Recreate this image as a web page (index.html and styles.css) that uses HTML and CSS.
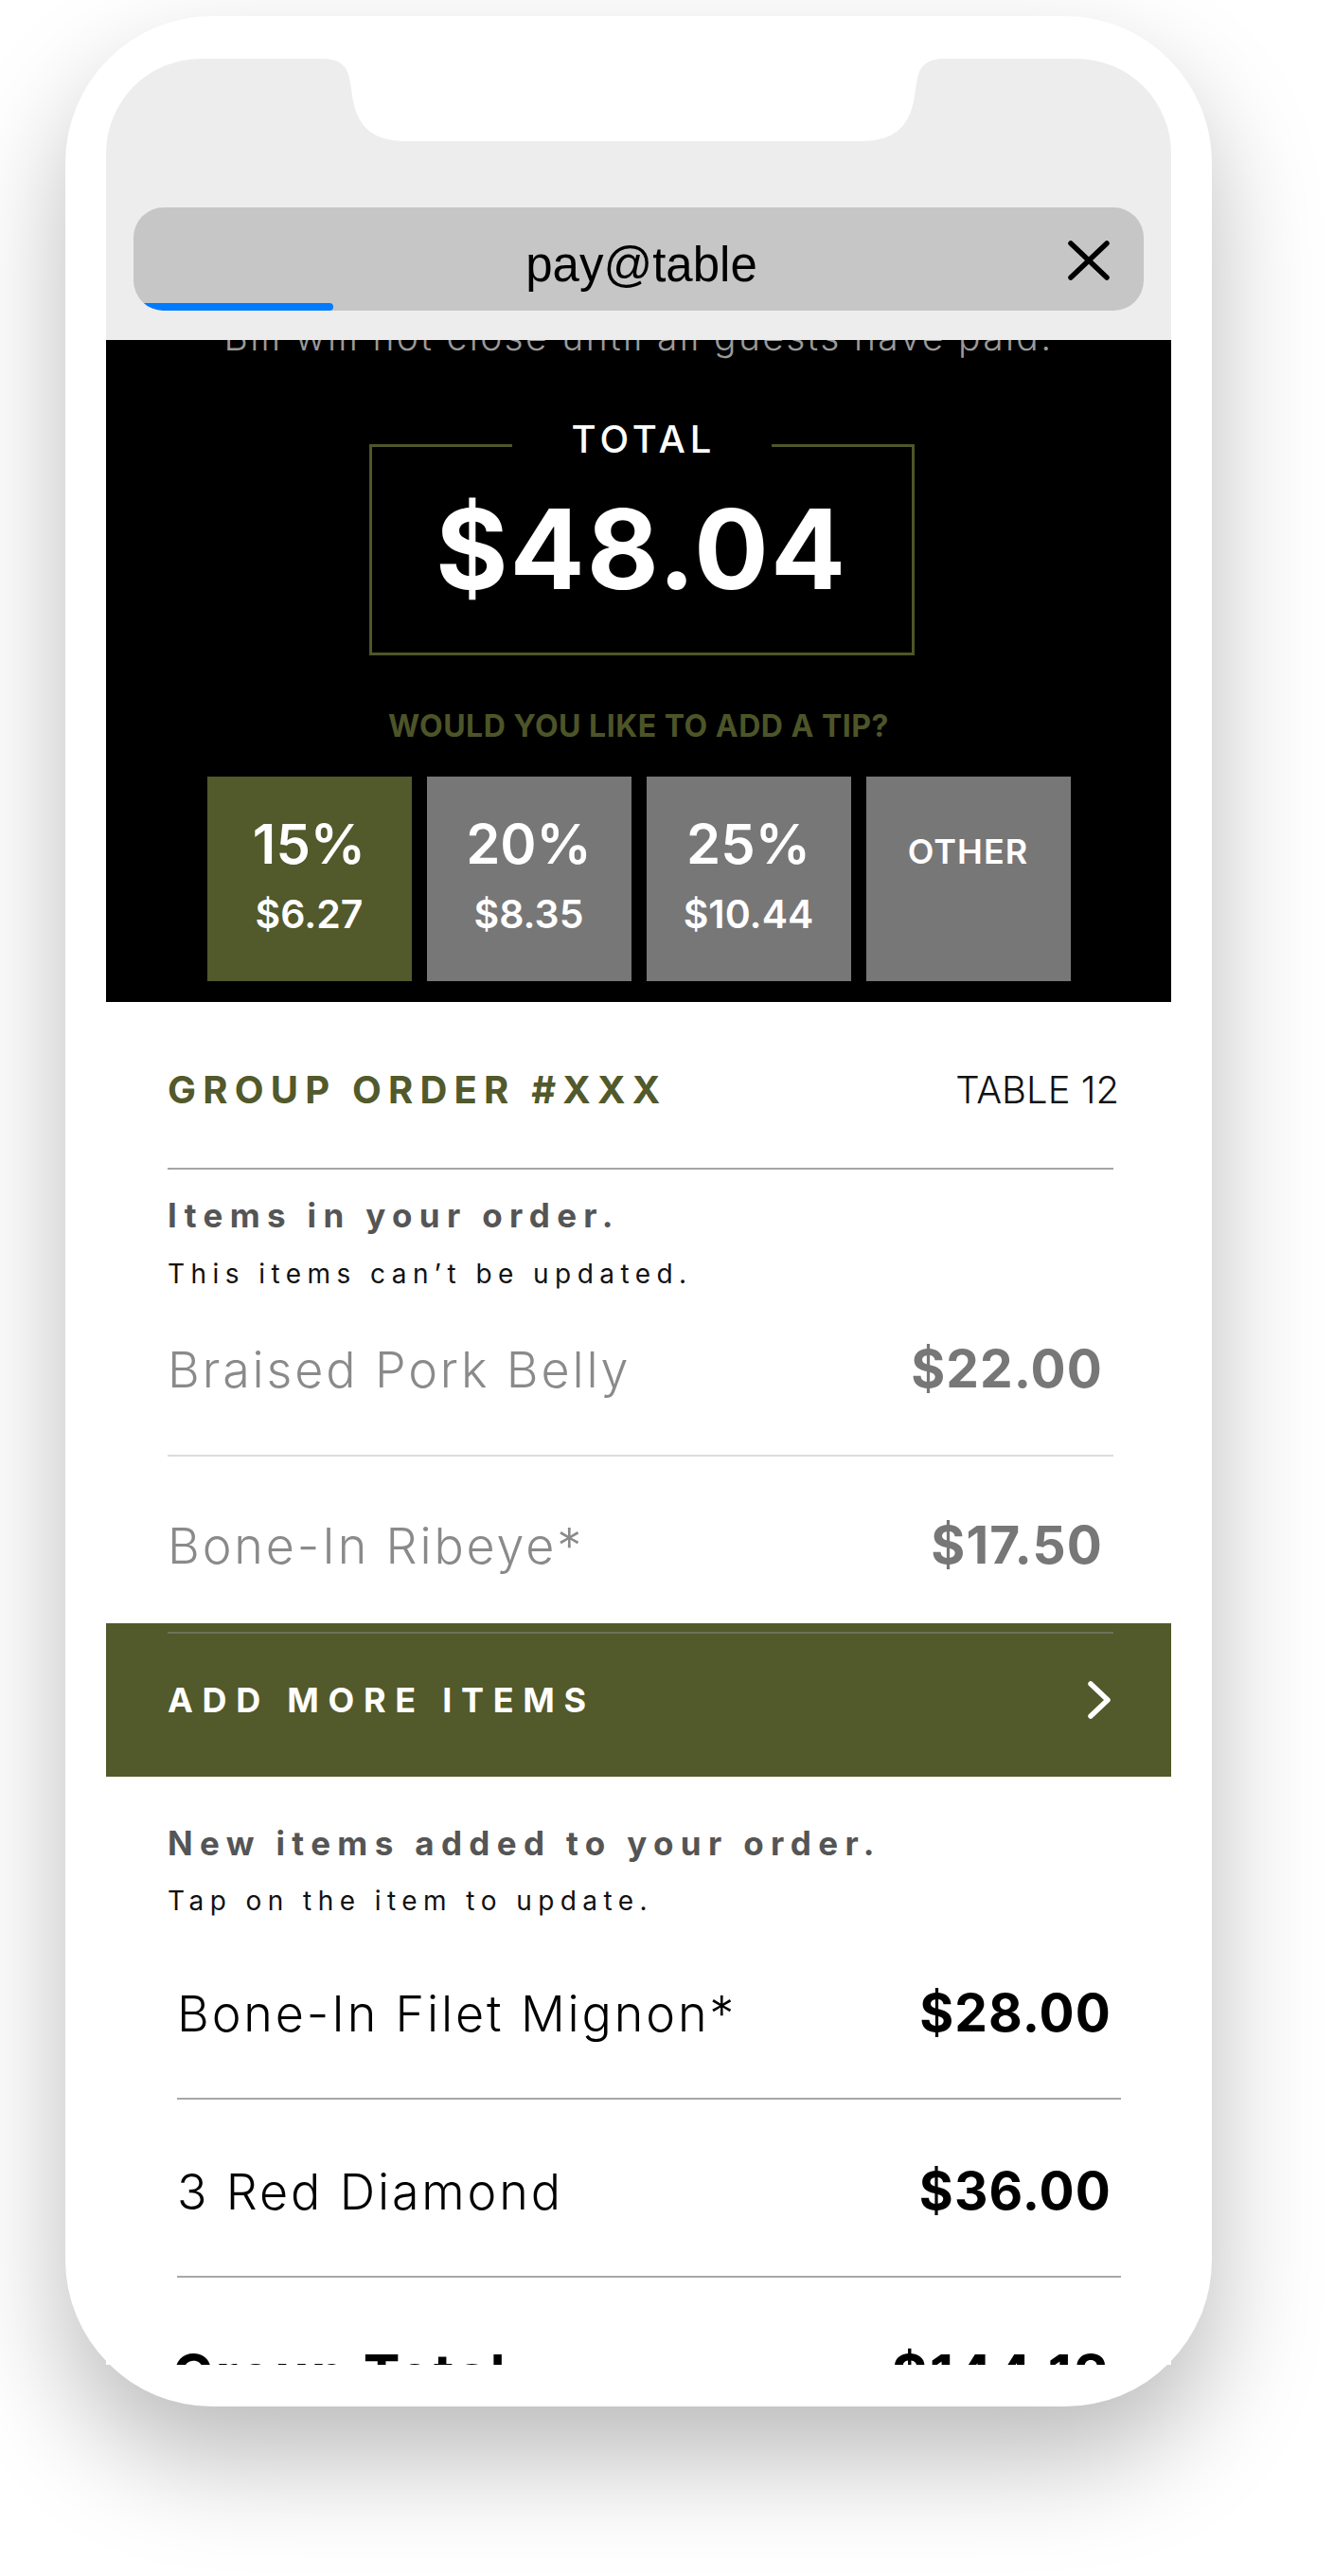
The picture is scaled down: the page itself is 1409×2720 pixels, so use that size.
FILE: index.html
```html
<!DOCTYPE html>
<html lang="en">
<head>
<meta charset="utf-8">
<title>pay@table</title>
<link rel="stylesheet" href="styles.css">
</head>
<body>
<div class="stage">
  <div class="phone">
    <div class="screen">
      <header class="browser">
        <div class="urlbar">
          <span class="url">pay@table</span>
          <svg class="close" viewBox="0 0 46 44" aria-hidden="true"><path d="M4 4 L42 40 M42 4 L4 40"/></svg>
          <span class="progress"></span>
        </div>
      </header>
      <main class="sheet">
        <section class="summary">
          <p class="note">Bill will not close until all guests have paid.</p>
          <fieldset class="total">
            <legend class="total-label">TOTAL</legend>
            <div class="amount">$48.04</div>
          </fieldset>
          <p class="tip-q">WOULD YOU LIKE TO ADD A TIP?</p>
          <div class="tips">
            <button class="tip tip-on"><span class="pct">15%</span><span class="amt">$6.27</span></button>
            <button class="tip"><span class="pct">20%</span><span class="amt">$8.35</span></button>
            <button class="tip"><span class="pct">25%</span><span class="amt">$10.44</span></button>
            <button class="tip"><span class="other">OTHER</span></button>
          </div>
        </section>
        <section class="order">
          <div class="order-head">
            <h2 class="order-title">GROUP ORDER #XXX</h2>
            <span class="table-no">TABLE 12</span>
          </div>
          <hr class="rule">
          <div class="group">
            <h3 class="group-title">Items in your order.</h3>
            <p class="hint">This items can’t be updated.</p>
          </div>
          <ul class="items placed">
            <li class="item"><span class="name">Braised Pork Belly</span><span class="price">$22.00</span></li>
            <li class="item"><span class="name">Bone-In Ribeye*</span><span class="price">$17.50</span></li>
          </ul>
          <a class="add-more" href="#">
            <span>ADD MORE ITEMS</span>
            <svg class="chev" viewBox="0 0 26 42" aria-hidden="true"><path d="M4 4 L22 21 L4 38"/></svg>
          </a>
          <div class="group group-new">
            <h3 class="group-title">New items added to your order.</h3>
            <p class="hint">Tap on the item to update.</p>
          </div>
          <ul class="items added">
            <li class="item"><span class="name">Bone-In Filet Mignon*</span><span class="price">$28.00</span></li>
            <li class="item"><span class="name">3 Red Diamond</span><span class="price">$36.00</span></li>
          </ul>
          <div class="grand"><span>Group Total</span><span>$144.12</span></div>
        </section>
      </main>
      <svg class="notch" viewBox="0 0 656 87" aria-hidden="true"><path d="M0 0 Q24 0 28 20 L32 45 Q40 87 85 87 L571 87 Q616 87 624 45 L628 20 Q632 0 656 0 Z"/></svg>
    </div>
  </div>
</div>
</body>
</html>
```

FILE: styles.css
```css
* { box-sizing: border-box; }

html, body {
  margin: 0;
  background: #fff;
}

body {
  width: 1409px;
  height: 2720px;
  overflow: hidden;
  font-family: Inter, "Noto Sans", sans-serif;
}

.stage {
  padding: 17px 0 0 69px;
}

.phone {
  width: 1211px;
  height: 2524px;
  border-radius: 155px;
  background: #fff;
  box-shadow: 0 55px 115px rgba(0, 0, 0, 0.27);
  padding: 45px 43px 0;
}

.screen {
  position: relative;
  width: 1125px;
  height: 2435px;
  border-radius: 100px 100px 0 0;
  overflow: hidden;
  background: #fff;
}

.notch {
  position: absolute;
  top: 0;
  left: 229px;
  width: 656px;
  height: 87px;
  fill: #fff;
}

/* browser chrome */
.browser {
  height: 297px;
  background: #ededed;
  padding: 157px 29px 0;
}

.urlbar {
  position: relative;
  height: 109px;
  border-radius: 32px;
  background: #c6c6c6;
  display: grid;
  grid-template-columns: 1fr auto 1fr;
  align-items: center;
  overflow: hidden;
}

.url {
  grid-column: 2;
  margin-top: 12px;
  margin-left: 6px;
  font-family: "Liberation Sans", Arial, sans-serif;
  font-size: 51px;
  line-height: 60px;
  color: #000;
}

.close {
  grid-column: 3;
  justify-self: end;
  margin-right: 35px;
  margin-top: 3px;
  width: 46px;
  height: 44px;
  fill: none;
  stroke: #000;
  stroke-width: 5.5;
  stroke-linecap: round;
}

.progress {
  position: absolute;
  left: 0;
  bottom: 0;
  width: 211px;
  height: 8px;
  background: #007aff;
  border-radius: 0 4px 4px 0;
}

/* summary */
.summary {
  height: 699px;
  background: #000;
  display: flex;
  flex-direction: column;
  align-items: center;
  overflow: hidden;
}

.note {
  margin: -26px 0 0;
  font-size: 39px;
  line-height: 46px;
  font-weight: 300;
  letter-spacing: 0.06em;
  color: #9a9a9a;
}

.total {
  width: 576px;
  height: 248px;
  min-inline-size: 0;
  margin: 65px 0 0 6px;
  padding: 25px 0 0;
  border: 3px solid #4f5628;
  text-align: center;
}

.total-label {
  margin: 0 auto;
  padding: 0 58px 12px 63px;
  font-size: 40px;
  line-height: 40px;
  font-weight: 500;
  letter-spacing: 5px;
  color: #fff;
}

.amount {
  font-size: 117px;
  line-height: 117px;
  font-weight: 700;
  letter-spacing: 2px;
  color: #fff;
}

.tip-q {
  margin: 59px 0 0;
  font-size: 32px;
  line-height: 32px;
  font-weight: 700;
  letter-spacing: 0.5px;
  color: #4d5528;
}

.tips {
  margin-top: 37px;
  display: grid;
  grid-template-columns: repeat(4, 216px);
  gap: 16px;
}

.tip {
  height: 216px;
  border: 0;
  padding: 42px 0 0;
  background: #777;
  color: #fff;
  font-family: inherit;
  display: flex;
  flex-direction: column;
  align-items: center;
}

.tip-on { background: #52592b; }

.pct {
  font-size: 58px;
  line-height: 58px;
  font-weight: 600;
}

.amt {
  margin-top: 25px;
  font-size: 41px;
  line-height: 41px;
  font-weight: 600;
}

.other {
  margin-top: 19px;
  font-size: 36px;
  line-height: 36px;
  font-weight: 600;
  letter-spacing: 1px;
}

/* order */
.order {
  padding-top: 73px;
}

.order-head {
  display: flex;
  justify-content: space-between;
  align-items: baseline;
  margin: 0 55px 0 65px;
}

.order-title {
  margin: 0;
  font-size: 40px;
  line-height: 40px;
  font-weight: 700;
  letter-spacing: 0.18em;
  color: #52592b;
}

.table-no {
  font-size: 40px;
  line-height: 40px;
  font-weight: 300;
  color: #111;
}

.rule {
  margin: 62px 61px 0 65px;
  height: 2px;
  border: 0;
  background: #a5a5a5;
}

.group {
  padding: 30px 0 0 65px;
}

.group-title {
  margin: 0;
  font-size: 35px;
  line-height: 36px;
  font-weight: 700;
  letter-spacing: 0.21em;
  color: #555;
}

.hint {
  margin: 30px 0 0;
  font-size: 28px;
  line-height: 28px;
  font-weight: 400;
  letter-spacing: 0.23em;
  color: #111;
}

.items {
  list-style: none;
  padding: 0;
}

.item {
  display: flex;
  justify-content: space-between;
  align-items: baseline;
  height: 186px;
  padding: 66px 11px 0 0;
  border-bottom: 2px solid #dcdcdc;
}

.name {
  font-size: 52px;
  line-height: 52px;
  font-weight: 300;
  letter-spacing: 0.055em;
  color: #8a8a8a;
}

.price {
  font-size: 55px;
  line-height: 55px;
  font-weight: 700;
  letter-spacing: 0.02em;
  color: #777;
}

.placed {
  margin: -7px 61px 0 65px;
}

.placed .item:last-child {
  height: 176px;
  border-bottom: 0;
}

.add-more {
  position: relative;
  display: flex;
  justify-content: space-between;
  align-items: center;
  height: 162px;
  padding: 0 63px 0 65px;
  background: #52592b;
  color: #fff;
  text-decoration: none;
  font-size: 36px;
  line-height: 36px;
  font-weight: 700;
  letter-spacing: 0.27em;
}

.add-more::before {
  content: "";
  position: absolute;
  top: 9px;
  left: 65px;
  right: 61px;
  height: 2px;
  background: #707259;
}

.chev {
  width: 26px;
  height: 42px;
  fill: none;
  stroke: #fff;
  stroke-width: 5.5;
  stroke-linecap: round;
  stroke-linejoin: round;
}

.group-new {
  padding-top: 52px;
}

.group-new .hint {
  margin-top: 29px;
}

.added {
  margin: 8px 53px 0 75px;
}

.added .item {
  height: 188px;
  padding: 69px 10px 0 0;
  border-bottom-color: #a8a8a8;
}

.added .name { color: #000; }
.added .price { color: #000; }

.grand {
  display: flex;
  justify-content: space-between;
  align-items: baseline;
  margin: 0 64px 0 70px;
  padding-top: 73px;
  font-size: 58px;
  line-height: 58px;
  font-weight: 700;
  letter-spacing: 0.04em;
  color: #000;
}
```
